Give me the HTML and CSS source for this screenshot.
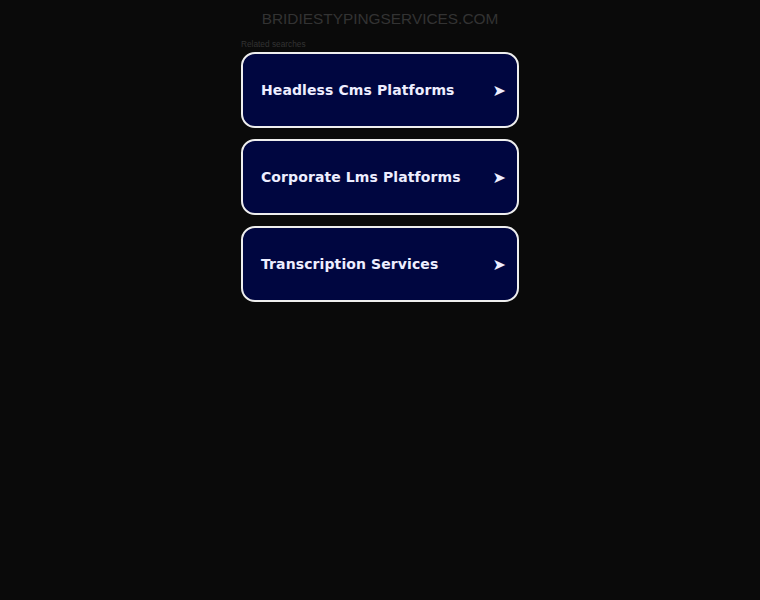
FILE: index.html
```html
<!DOCTYPE html>
<html>
<head>
<meta charset="utf-8">
<link rel="stylesheet" href="styles.css">
</head>
<body>
<div class="page">
  <div class="domain">BRIDIESTYPINGSERVICES.COM</div>
  <div class="related">
    <div class="label">Related searches</div>
    <a class="card" href="#"><span class="text">Headless Cms Platforms</span><span class="arrow">➤</span></a>
    <a class="card" href="#"><span class="text">Corporate Lms Platforms</span><span class="arrow">➤</span></a>
    <a class="card" href="#"><span class="text">Transcription Services</span><span class="arrow">➤</span></a>
  </div>
</div>
</body>
</html>
```
FILE: styles.css
```css
html, body {
  margin: 0;
  padding: 0;
  background: #0a0a0a;
}
.page {
  display: flex;
  flex-direction: column;
  align-items: center;
}
.domain {
  font-family: "Liberation Sans", Arial, sans-serif;
  font-size: 15.4px;
  color: #333333;
  margin-top: 10px;
  line-height: 18px;
}
.related {
  width: 278px;
  margin-top: 11px;
  display: flex;
  flex-direction: column;
  gap: 11px;
}
.label {
  font-family: "Liberation Sans", Arial, sans-serif;
  font-size: 8.3px;
  color: #333333;
  line-height: 10px;
  margin-bottom: -8px;
}
.card {
  box-sizing: border-box;
  height: 76px;
  border: 2px solid #eeeeee;
  border-radius: 14px;
  background: #000640;
  display: flex;
  align-items: center;
  justify-content: space-between;
  padding: 0 11px 0 18px;
  text-decoration: none;
  color: #eeeeff;
  font-family: "DejaVu Sans", Verdana, sans-serif;
  font-weight: bold;
  font-size: 14px;
  letter-spacing: 0.1px;
}
.arrow {
  font-size: 16px;
}
```
